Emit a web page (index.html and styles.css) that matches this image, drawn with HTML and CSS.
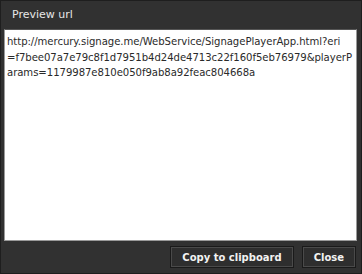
FILE: index.html
```html
<!DOCTYPE html>
<html>
<head>
	<title>Preview url</title>
	<link rel="stylesheet" href="styles.css">
</head>
<body>
	<div class="dialog">
		<div class="dialog-title">Preview url</div>
		<div class="dialog-body">
			<textarea class="url-box" readonly>http://mercury.signage.me/WebService/SignagePlayerApp.html?eri
=f7bee07a7e79c8f1d7951b4d24de4713c22f160f5eb76979&amp;playerP
arams=1179987e810e050f9ab8a92feac804668a</textarea>
		</div>
		<div class="dialog-buttons">
			<button class="btn">Copy to clipboard</button>
			<button class="btn">Close</button>
		</div>
	</div>
</body>
</html>
```
FILE: styles.css
```css
body {
	margin: 0;
	font-family: "DejaVu Sans", Verdana, sans-serif;
	background: #fff;
}
.dialog {
	width: 362px;
	height: 274px;
	box-sizing: border-box;
	background: #313131;
	border: 1px solid #1e1e1e;
	display: flex;
	flex-direction: column;
}
.dialog-title {
	height: 28px;
	line-height: 28px;
	padding-left: 11px;
	color: #e6e6e6;
	font-size: 11px;
}
.dialog-body {
	flex: 1;
	padding: 0 4px 0 3px;
	display: flex;
}
.url-box {
	flex: 1;
	margin: 0;
	resize: none;
	border: 1px solid #9a9a9a;
	border-top-color: #555;
	background: #fff;
	color: #2a2a2a;
	font-family: "DejaVu Sans", Verdana, sans-serif;
	font-size: 10.1px;
	letter-spacing: -0.05px;
	line-height: 15.5px;
	padding: 4px 1px 4px 2px;
	overflow: hidden;
	white-space: pre;
}
.dialog-buttons {
	height: 32px;
	display: flex;
	justify-content: flex-end;
	align-items: center;
	gap: 8px;
	padding-right: 5px;
}
.btn {
	height: 22px;
	padding: 0 11px;
	background: #2e2e2e;
	border: 1px solid #1a1a1a;
	box-shadow: inset 0 0 0 1px #4a4a4a;
	color: #f2f2f2;
	font-family: "DejaVu Sans", Verdana, sans-serif;
	font-weight: bold;
	font-size: 10px;
}
```
